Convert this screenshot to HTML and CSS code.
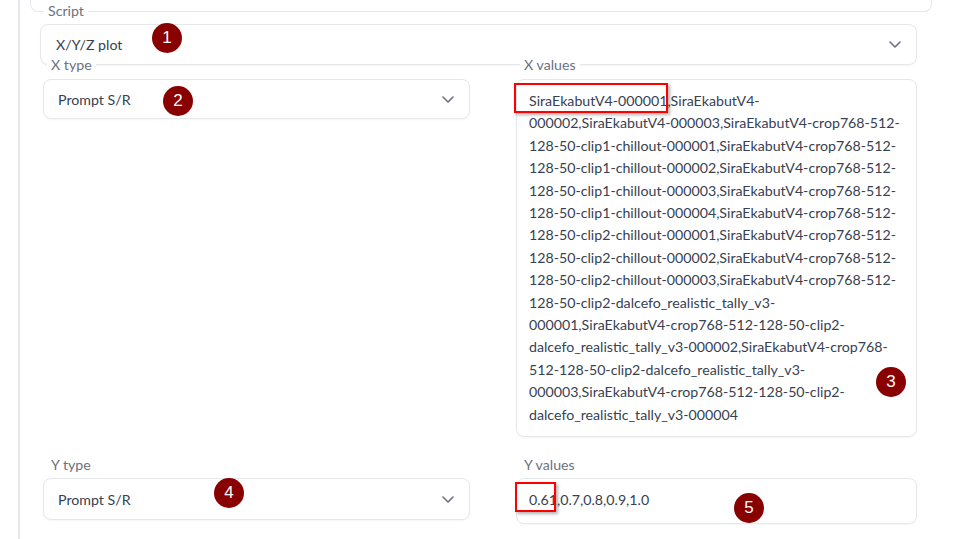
FILE: index.html
```html
<!DOCTYPE html>
<html lang="en">
<head>
    <meta charset="UTF-8">
    <meta name="viewport" content="width=device-width, initial-scale=1.0">
    <title>X/Y/Z plot</title>
    <link rel="stylesheet" href="styles.css">
</head>
<body>
    <div class="page">
        <div class="accordion">
            <div class="card-top"></div>

            <div class="field script">
                <span class="label">Script</span>
                <div class="select">
                    <span>X/Y/Z plot</span>
                    <svg class="chevron" width="12" height="7" viewBox="0 0 12 7"><polyline points="1,1 6,6 11,1"/></svg>
                </div>
            </div>

            <div class="row x-row">
                <div class="field col-left">
                    <span class="label">X type</span>
                    <div class="select">
                        <span>Prompt S/R</span>
                        <svg class="chevron" width="12" height="7" viewBox="0 0 12 7"><polyline points="1,1 6,6 11,1"/></svg>
                    </div>
                </div>
                <div class="field col-right">
                    <span class="label">X values</span>
                    <div class="textbox tall">
                        <div class="line">SiraEkabutV4-000001,SiraEkabutV4-</div>
                        <div class="line">000002,SiraEkabutV4-000003,SiraEkabutV4-crop768-512-</div>
                        <div class="line">128-50-clip1-chillout-000001,SiraEkabutV4-crop768-512-</div>
                        <div class="line">128-50-clip1-chillout-000002,SiraEkabutV4-crop768-512-</div>
                        <div class="line">128-50-clip1-chillout-000003,SiraEkabutV4-crop768-512-</div>
                        <div class="line">128-50-clip1-chillout-000004,SiraEkabutV4-crop768-512-</div>
                        <div class="line">128-50-clip2-chillout-000001,SiraEkabutV4-crop768-512-</div>
                        <div class="line">128-50-clip2-chillout-000002,SiraEkabutV4-crop768-512-</div>
                        <div class="line">128-50-clip2-chillout-000003,SiraEkabutV4-crop768-512-</div>
                        <div class="line">128-50-clip2-dalcefo_realistic_tally_v3-</div>
                        <div class="line">000001,SiraEkabutV4-crop768-512-128-50-clip2-</div>
                        <div class="line">dalcefo_realistic_tally_v3-000002,SiraEkabutV4-crop768-</div>
                        <div class="line">512-128-50-clip2-dalcefo_realistic_tally_v3-</div>
                        <div class="line">000003,SiraEkabutV4-crop768-512-128-50-clip2-</div>
                        <div class="line">dalcefo_realistic_tally_v3-000004</div>
                    </div>
                </div>
            </div>

            <div class="row y-row">
                <div class="field col-left">
                    <span class="label">Y type</span>
                    <div class="select y-select">
                        <span>Prompt S/R</span>
                        <svg class="chevron" width="12" height="7" viewBox="0 0 12 7"><polyline points="1,1 6,6 11,1"/></svg>
                    </div>
                </div>
                <div class="field col-right">
                    <span class="label">Y values</span>
                    <div class="textbox short">
                        <div class="line">0.61,0.7,0.8,0.9,1.0</div>
                    </div>
                </div>
            </div>
        </div>

        <!-- annotations -->
        <div class="mark mark-x"></div>
        <div class="mark mark-y"></div>
        <div class="badge b1">1</div>
        <div class="badge b2">2</div>
        <div class="badge b3">3</div>
        <div class="badge b4">4</div>
        <div class="badge b5">5</div>
    </div>
</body>
</html>
```

FILE: styles.css
```css
body {
    margin: 0;
    background: #fff;
    font-family: Lato, "Noto Sans", sans-serif;
    font-size: 14.2px;
    color: #374151;
}
.page {
    position: relative;
    width: 963px;
    height: 539px;
    overflow: hidden;
}
.accordion {
    margin-left: 18px;
    border-left: 2px solid #e5e7eb;
    height: 539px;
}
.card-top {
    margin-left: 10px;
    width: 900px;
    height: 11px;
    border: 1px solid #e5e7eb;
    border-top: none;
    border-radius: 0 0 8px 8px;
}
.label {
    position: relative;
    display: block;
    width: fit-content;
    margin-left: 4px;
    padding: 0 4px;
    line-height: 16px;
    background: #fff;
    color: #6b7280;
}
.script {
    margin-left: 20px;
    width: 877px;
    margin-top: -9px;
}
.select {
    display: flex;
    align-items: center;
    justify-content: space-between;
    box-sizing: border-box;
    padding: 0 15px 0 14px;
    border: 1px solid #e5e7eb;
    border-radius: 8px;
    box-shadow: 0 1px 2px rgba(0, 0, 0, 0.04);
    background: #fff;
}
.script .select {
    margin-top: 5px;
    height: 41px;
    padding-left: 15px;
}
.chevron {
    fill: none;
    stroke: #6b7280;
    stroke-width: 1.6;
    stroke-linecap: round;
    stroke-linejoin: round;
}
.row {
    display: flex;
    gap: 46px;
    margin-left: 23px;
}
.x-row {
    margin-top: -8px;
}
.y-row {
    margin-top: 20px;
}
.col-left {
    width: 427px;
}
.col-right {
    width: 401px;
}
.x-row .select,
.x-row .textbox {
    margin-top: 6px;
}
.x-row .select {
    height: 40px;
}
.y-row .select,
.y-row .textbox {
    margin-top: 5px;
}
.y-select {
    height: 42px;
}
.textbox {
    box-sizing: border-box;
    border: 1px solid #e5e7eb;
    border-radius: 8px;
    box-shadow: 0 1px 2px rgba(0, 0, 0, 0.04);
    padding: 10px 12px;
    line-height: 22.4px;
}
.textbox.tall {
    height: 358px;
}
.textbox.short {
    height: 46px;
    padding-top: 10px;
}
.line {
    white-space: nowrap;
}
.mark {
    position: absolute;
    box-sizing: border-box;
    border: 2.5px solid #f00;
    box-shadow: 2px 2px 3px rgba(0, 0, 0, 0.3);
}
.mark-x {
    left: 514px;
    top: 83px;
    width: 154px;
    height: 30px;
}
.mark-y {
    left: 515px;
    top: 482px;
    width: 41px;
    height: 30px;
}
.badge {
    position: absolute;
    width: 30px;
    height: 30px;
    border-radius: 50%;
    background: #880000;
    color: #fff;
    font-family: "Liberation Sans", Arial, sans-serif;
    font-size: 17px;
    line-height: 30px;
    text-align: center;
}
.b1 { left: 152px; top: 23px; }
.b2 { left: 163px; top: 86px; }
.b3 { left: 876px; top: 367px; }
.b4 { left: 214px; top: 478px; }
.b5 { left: 734px; top: 493px; }
```
